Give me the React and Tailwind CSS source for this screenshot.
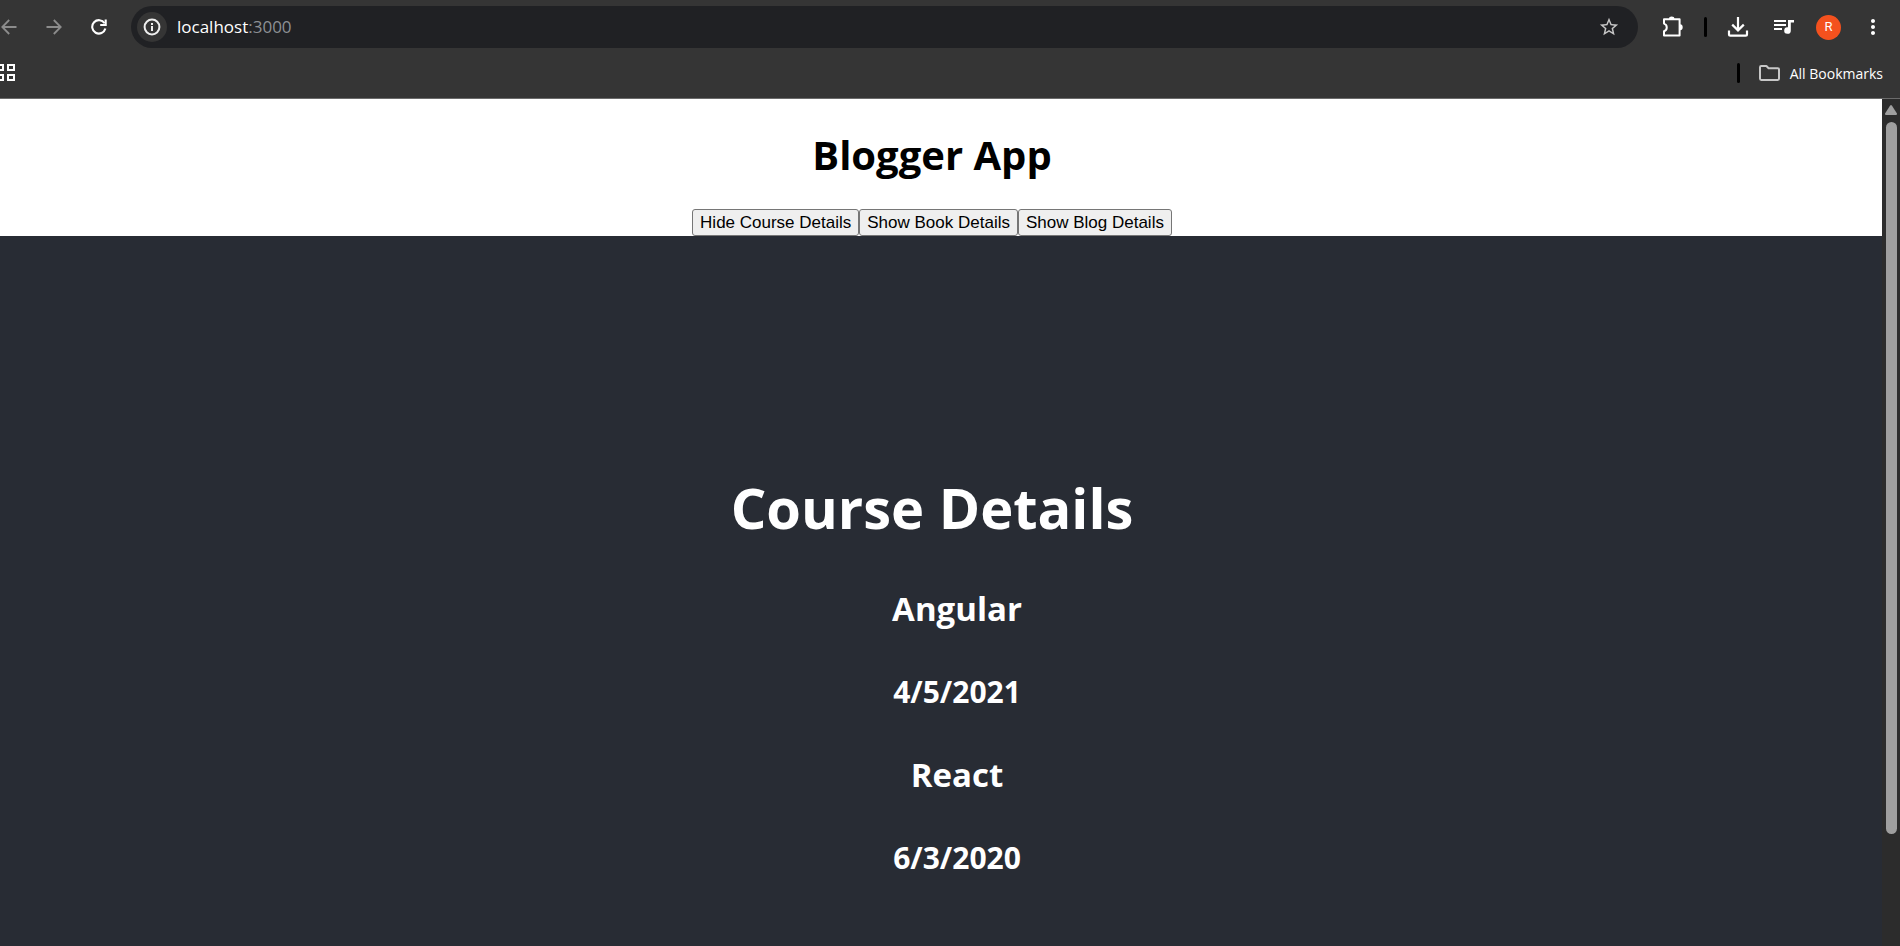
import React, { useState } from "react";
import { MdMoreVert, MdStarBorder } from "react-icons/md";

const courses = [
  { id: 1, name: "Angular", date: "4/5/2021" },
  { id: 2, name: "React", date: "6/3/2020" },
];

function ArrowIcon({ flip }) {
  return (
    <svg width="16" height="16" viewBox="0 0 16 16" fill="none" stroke="currentColor" strokeWidth="1.8" className={flip ? "rotate-180" : ""}>
      <path d="M15.5 8H1.6M8.2 1L1.3 8l6.9 7" />
    </svg>
  );
}

function ReloadIcon() {
  return (
    <svg width="16" height="16" viewBox="0 0 16 16" fill="none" stroke="currentColor" strokeWidth="2.1">
      <path d="M13.6 4.3A6.7 6.7 0 1 0 14.4 9.6" />
      <path d="M14.7 0.5V6H9.2" />
    </svg>
  );
}

function InfoIcon() {
  return (
    <svg width="18" height="18" viewBox="0 0 18 18" fill="none" stroke="currentColor" strokeWidth="2">
      <circle cx="9" cy="9" r="7.4" />
      <path d="M9 8v5M9 4.9v2" />
    </svg>
  );
}

function PuzzleIcon() {
  return (
    <svg width="22" height="22" viewBox="0 0 22 22" fill="none">
      <path
        d="M2 3.2H17.6V19.4H2V15.2A4 4 0 0 0 2 7.6Z"
        stroke="currentColor"
        strokeWidth="2"
        strokeLinejoin="round"
      />
      <path d="M7 3a2.7 2.4 0 0 1 5.4 0zM18 8.3a2.7 3 0 0 1 0 6z" fill="currentColor" />
    </svg>
  );
}

function DownloadIcon() {
  return (
    <svg width="22" height="22" viewBox="0 0 22 22" fill="none" stroke="currentColor" strokeWidth="2.2">
      <path d="M11 1v13M5.2 8.6L11 14.4l5.8-5.8" />
      <path d="M2 14.5v3.8c0 .9.5 1.4 1.4 1.4h15.2c.9 0 1.4-.5 1.4-1.4v-3.8" />
    </svg>
  );
}

function PlaylistIcon() {
  return (
    <svg width="20" height="18" viewBox="0 0 20 18" fill="currentColor">
      <path d="M0 2h12v2H0zM0 6h12v2H0zM0 10h8v2H0z" />
      <path d="M14 2h6v2.4h-3.2v8.1a3.3 3.3 0 1 1-2.8-3.2z" />
    </svg>
  );
}

function AppsIcon() {
  return (
    <svg width="15" height="18" viewBox="0 0 15 18" fill="none" stroke="currentColor" strokeWidth="2">
      <path d="M-3 1h6v5H-3zM8 1h6v5H8zM-3 11h6v5H-3zM8 11h6v5H8z" />
    </svg>
  );
}

function FolderIcon() {
  return (
    <svg width="21" height="16" viewBox="0 0 21 16" fill="none" stroke="currentColor" strokeWidth="2" strokeLinejoin="round">
      <path d="M1 13.6V2.2C1 1.5 1.5 1 2.2 1h5.2l2.2 2.3h9.2c.7 0 1.2.5 1.2 1.2v9.1c0 .8-.5 1.3-1.2 1.3H2.2C1.5 14.9 1 14.4 1 13.6z" />
    </svg>
  );
}

function Divider() {
  return <span className="h-5 w-[3px] shrink-0 rounded-full bg-black" />;
}

function BrowserChrome() {
  return (
    <header className="shrink-0 border-b border-[#6b6b6b] bg-[#353535] font-['Open_Sans','Noto_Sans',sans-serif] text-white">
      <div className="flex items-center pt-[6px]">
        <div className="flex items-center gap-[29px] pl-px pr-6">
          <button type="button" aria-label="Back" className="text-[#8c8c8c]"><ArrowIcon /></button>
          <button type="button" aria-label="Forward" className="text-[#8c8c8c]"><ArrowIcon flip /></button>
          <button type="button" aria-label="Reload"><ReloadIcon /></button>
        </div>
        <div className="flex h-[42px] flex-1 items-center rounded-full bg-[#202124] pl-[6px] pr-[18px]">
          <button type="button" aria-label="Site information" className="flex size-[30px] items-center justify-center rounded-full bg-[#353535] text-[#eeeeee]">
            <InfoIcon />
          </button>
          <div className="ml-[10px] flex-1 text-[17px]">
            localhost<span className="text-[#8d9094]">:3000</span>
          </div>
          <button type="button" aria-label="Bookmark this tab" className="text-[#c7c7c7]"><MdStarBorder size={22} /></button>
        </div>
        <div className="flex items-center pl-6 pr-[15px]">
          <button type="button" aria-label="Extensions"><PuzzleIcon /></button>
          <span className="ml-5 flex"><Divider /></span>
          <button type="button" aria-label="Downloads" className="ml-5"><DownloadIcon /></button>
          <button type="button" aria-label="Media controls" className="ml-[25px]"><PlaylistIcon /></button>
          <button type="button" aria-label="Profile" className="ml-[22px] flex size-[25px] items-center justify-center rounded-full bg-[#f4511e] font-['Roboto',sans-serif] text-[13px]">R</button>
          <button type="button" aria-label="Menu" className="ml-5"><MdMoreVert size={24} /></button>
        </div>
      </div>
      <div className="flex h-[50px] items-center justify-between pr-[17px]">
        <button type="button" aria-label="Apps"><AppsIcon /></button>
        <div className="flex items-center">
          <Divider />
          <button type="button" className="ml-[19px] flex items-center gap-[10px] text-[14px]">
            <span className="text-[#c7c7c7]"><FolderIcon /></span>
            All Bookmarks
          </button>
        </div>
      </div>
    </header>
  );
}

function ToggleButton({ label, shown, onClick }) {
  return (
    <button
      type="button"
      onClick={onClick}
      className="rounded-[3px] border border-[#767676] bg-[#efefef] px-[7px] font-['Liberation_Sans',Arial,sans-serif] text-[17px] leading-[25px] font-normal text-black"
    >
      {(shown ? "Hide " : "Show ") + label}
    </button>
  );
}

function Scrollbar() {
  return (
    <div className="flex w-[18px] shrink-0 flex-col items-center bg-[#2c2c2c] pt-[6px]">
      <svg width="12" height="10" viewBox="0 0 12 10" fill="#9f9f9f">
        <path d="M5 .8a1.2 1.2 0 0 1 2 0l4.8 7.5c.5.8.1 1.7-.9 1.7H1.1C.1 10-.3 9.1 .2 8.3z" />
      </svg>
      <div className="mt-[7px] h-11/13 w-[11px] rounded-full bg-[#9f9f9f]" />
    </div>
  );
}

export default function App() {
  const [courseShown, setCourseShown] = useState(true);
  const [bookShown, setBookShown] = useState(false);
  const [blogShown, setBlogShown] = useState(false);

  return (
    <div className="flex h-screen flex-col overflow-hidden bg-[#282c34]">
      <BrowserChrome />
      <div className="flex min-h-0 flex-1">
        <main className="flex min-w-0 flex-1 flex-col font-['Open_Sans','Noto_Sans',sans-serif] font-bold">
          <div className="flex flex-col items-center bg-white pr-[18px] pt-7 text-black">
            <h1 className="text-[40px] leading-[56px]">Blogger App</h1>
            <div className="mt-[26px] flex">
              <ToggleButton label="Course Details" shown={courseShown} onClick={() => setCourseShown(!courseShown)} />
              <ToggleButton label="Book Details" shown={bookShown} onClick={() => setBookShown(!bookShown)} />
              <ToggleButton label="Blog Details" shown={blogShown} onClick={() => setBlogShown(!blogShown)} />
            </div>
          </div>
          {courseShown && (
            <section className="flex flex-1 flex-col items-center pr-[18px] pt-[231px] text-white">
              <h1 className="text-[56px] leading-[80px]">Course Details</h1>
              <ul className="mt-5 pl-[50px] text-center">
                {courses.map((course) => (
                  <li key={course.id}>
                    <h2 className="text-[33px] leading-[83px]">{course.name}</h2>
                    <h3 className="text-[30px] leading-[83px]">{course.date}</h3>
                  </li>
                ))}
              </ul>
            </section>
          )}
        </main>
        <Scrollbar />
      </div>
    </div>
  );
}
